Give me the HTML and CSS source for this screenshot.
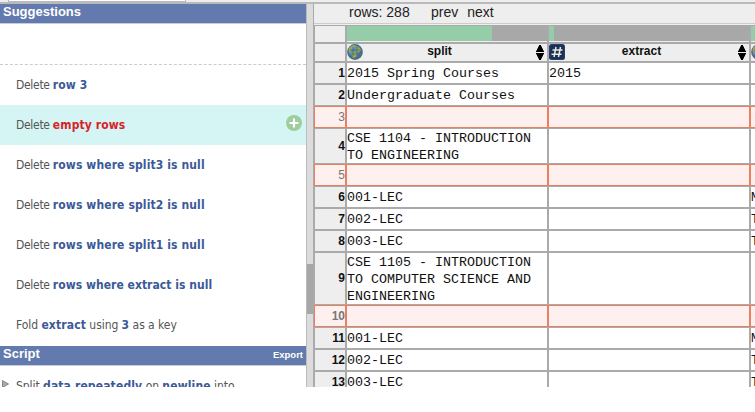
FILE: index.html
```html
<!DOCTYPE html>
<html lang="en">
<head>
<meta charset="utf-8">
<title>Data Wrangler</title>
<link rel="stylesheet" href="styles.css">
</head>
<body>
<svg class="defs" width="0" height="0" aria-hidden="true">
  <symbol id="globe" viewBox="0 0 16 16">
    <circle cx="8" cy="8" r="7.9" fill="#47708a"/>
    <circle cx="7" cy="6.500" r="5.600" fill="#6096b2"/>
    <path d="M2 4 6 1.500 9 2 7 4 5 5 4 7 2 8zM9 4l3-1 2 3-2 2-3-1zM4 9l4-1 3 2-2 3-3 1-1-3z" fill="#a5a54b"/>
    <path d="M3 6h10M4 10h8M6 3v9M10 3v9" stroke="#34607d" stroke-width=".6" fill="none"/>
  </symbol>
  <symbol id="sort" viewBox="0 0 10 15">
    <path d="M4 0h2v1l1 1v1l1 1v1l1 1v1H1V6l1-1V4l1-1V2l1-1zM1 8h8v1L8 10v1l-1 1v1l-1 1v1H4v-1l-1-1v-1l-1-1v-1L1 9z" fill="#000"/>
  </symbol>
</svg>
<div class="app">
  <div class="topstrip"><div class="tab"></div></div>
  <div class="main">
    <aside class="side">
      <div class="head">Suggestions</div>
      <div class="blank"></div>
      <div class="item">Delete <b>row 3</b></div>
      <div class="item active">Delete <b>empty rows</b>
        <svg class="add" viewBox="0 0 16 16"><circle cx="8" cy="8" r="8" fill="#9dce9b"/><path d="M8 3.500v9M3.500 8h9" stroke="#fff" stroke-width="2.200"/></svg>
      </div>
      <div class="item">Delete <b>rows where split3 is null</b></div>
      <div class="item">Delete <b>rows where split2 is null</b></div>
      <div class="item">Delete <b>rows where split1 is null</b></div>
      <div class="item">Delete <b class="tight">rows where extract is null</b></div>
      <div class="item wide">Fold <b>extract</b> using <b>3</b> as a key</div>
      <div class="head script">Script<span>Export</span></div>
      <div class="step"><svg viewBox="0 0 7 8"><path d="M.5.5 6.500 4 .5 7.500z" fill="#aaa" stroke="#888"/></svg>Split <b>data repeatedly</b> on <b>newline</b> into</div>
    </aside>
    <div class="scroll"><div class="thumb"></div></div>
    <section class="data">
      <div class="pager"><span class="count">rows: 288</span><span>prev</span><span>next</span></div>
      <table>
        <colgroup><col class="cn"><col class="cd"><col class="cd"><col class="cd"></colgroup>
        <tr class="quality"><th></th><th><div class="bar"><i class="q1"></i></div></th><th><div class="bar"><i class="q2"></i></div></th><th><div class="bar"><i class="q3"></i></div></th></tr>
        <tr class="names"><th></th>
          <th><div class="col"><svg class="type"><use href="#globe"/></svg><span>split</span><svg class="sort"><use href="#sort"/></svg></div></th>
          <th><div class="col"><svg class="type" viewBox="0 0 16 16"><rect width="16" height="16" rx="2.500" fill="#24406f"/><rect x="1" y="1" width="14" height="14" rx="2" fill="#1b2f57"/><path d="M7 3 5 13M11.500 3l-2 10M3.500 6h10M2.500 10.200h10" stroke="#e8e8e0" stroke-width="1.500"/></svg><span>extract</span><svg class="sort"><use href="#sort"/></svg></div></th>
          <th><div class="col"><svg class="type"><use href="#globe"/></svg></div></th></tr>
        <tr><th>1</th><td>2015 Spring Courses</td><td>2015</td><td></td></tr>
        <tr><th>2</th><td>Undergraduate Courses</td><td></td><td></td></tr>
        <tr class="del"><th>3</th><td></td><td></td><td></td></tr>
        <tr class="two"><th>4</th><td><div class="lines">CSE 1104 - INTRODUCTION<br>TO ENGINEERING</div></td><td></td><td></td></tr>
        <tr class="del"><th>5</th><td></td><td></td><td></td></tr>
        <tr><th>6</th><td>001-LEC</td><td></td><td>M</td></tr>
        <tr><th>7</th><td>002-LEC</td><td></td><td>T</td></tr>
        <tr><th>8</th><td>003-LEC</td><td></td><td>T</td></tr>
        <tr class="three"><th>9</th><td><div class="lines">CSE 1105 - INTRODUCTION<br>TO COMPUTER SCIENCE AND<br>ENGINEERING</div></td><td></td><td></td></tr>
        <tr class="del"><th class="strong">10</th><td></td><td></td><td></td></tr>
        <tr><th>11</th><td>001-LEC</td><td></td><td>M</td></tr>
        <tr><th>12</th><td>002-LEC</td><td></td><td>T</td></tr>
        <tr><th>13</th><td>003-LEC</td><td></td><td>T</td></tr>
      </table>
    </section>
  </div>
</div>
</body>
</html>
```
FILE: styles.css
```css
* { box-sizing: border-box; }
body { margin: 0; background: #fff; overflow: hidden; }
.defs { display: none; }
.app { width: 755px; height: 387px; overflow: hidden; display: flex; flex-direction: column; }
.topstrip { flex: none; height: 4px; background: #eee; border-bottom: 2px solid #b9b9b9; padding-left: 8px; }
.tab { width: 178px; height: 2px; background: #fff; border: 1px solid #b8bcc8; border-top: 0; }
.main { flex: 1; min-height: 0; display: flex; }

.side { width: 306px; flex: none; overflow: hidden; font: 12px/40px "DejaVu Sans Condensed", "DejaVu Sans", sans-serif; font-stretch: condensed; color: #555; }
.head { height: 20px; background: #627aad; border-bottom: 1px solid #c8cddb; padding: 0 3px; color: #fff; font: bold 13px/15px "Liberation Sans", sans-serif; display: flex; justify-content: space-between; }
.head span { font-size: 9.5px; line-height: 18px; }
.script { margin-top: 1px; }
.blank { height: 41px; border-bottom: 1px dashed #ccc; }
.item { height: 40px; padding-left: 16px; white-space: nowrap; position: relative; letter-spacing: -.3px; }
.side b { color: #3b5998; letter-spacing: .12px; }
.side .tight { letter-spacing: .04px; }
.side .wide { letter-spacing: -.06px; }
.active { background: #d5f5f4; }
.side .active b { color: #d8232a; }
.add { position: absolute; right: 4px; top: 10px; width: 16px; height: 16px; }
.step { height: 40px; display: flex; align-items: flex-start; white-space: pre; letter-spacing: -.06px; padding-left: 2px; }
.side .step b, .side .wide b { letter-spacing: .14px; }
.step svg { width: 7px; height: 8px; margin: 14px 7px 0 0; }

.scroll { width: 8px; flex: none; background: #dcdcdc; border-left: 1px solid #bbb; border-right: 1px solid #aaa; padding-top: 260px; }
.thumb { height: 50px; background: #a8a8a8; }

.data { flex: 1; min-width: 0; overflow: hidden; background: #eee; }
.pager { height: 20px; border-bottom: 1px solid #ccc; margin-bottom: 1px; padding-left: 35px; display: flex; gap: 9px; font: 14px/17px "Liberation Sans", sans-serif; color: #222; }
.count { width: 73px; }
table { width: 638px; table-layout: fixed; border-collapse: separate; border-spacing: 0; }
.cn { width: 32px; }
.cd { width: 202px; }
th, td { border: 1px solid #aaa; padding: 0; height: 22px; vertical-align: middle; }
td { background: #fff; font: 13.333px/17px "Liberation Mono", monospace; color: #111; white-space: nowrap; }
th { background: #eee; text-align: right; font: bold 12px/17px "Liberation Sans", sans-serif; color: #111; }
.quality th { height: 18px; }
.names th { height: 19px; }
.two > * { height: 36px; }
.three > * { height: 53px; }
.lines { padding-top: 1px; margin-bottom: -1px; }
.bar { height: 15px; background: #a8a8a8; margin-bottom: 1px; }
.bar i { display: block; height: 15px; background: #95cda8; }
.q1 { width: 145px; }
.q2 { width: 5px; }
.q3 { width: 100px; }
.col { height: 17px; display: flex; line-height: 15px; }
.col span { flex: 1; text-align: center; margin-left: -7px; padding-right: 12px; }
.type { width: 16px; height: 16px; flex: none; }
.sort { width: 10px; height: 15px; flex: none; margin: 1px 2px 0 0; }
.del > * { background: #fff0f0; border-color: #e9805f; }
.del th { color: #777; font-weight: normal; }
.del .strong { font-weight: bold; }
```
